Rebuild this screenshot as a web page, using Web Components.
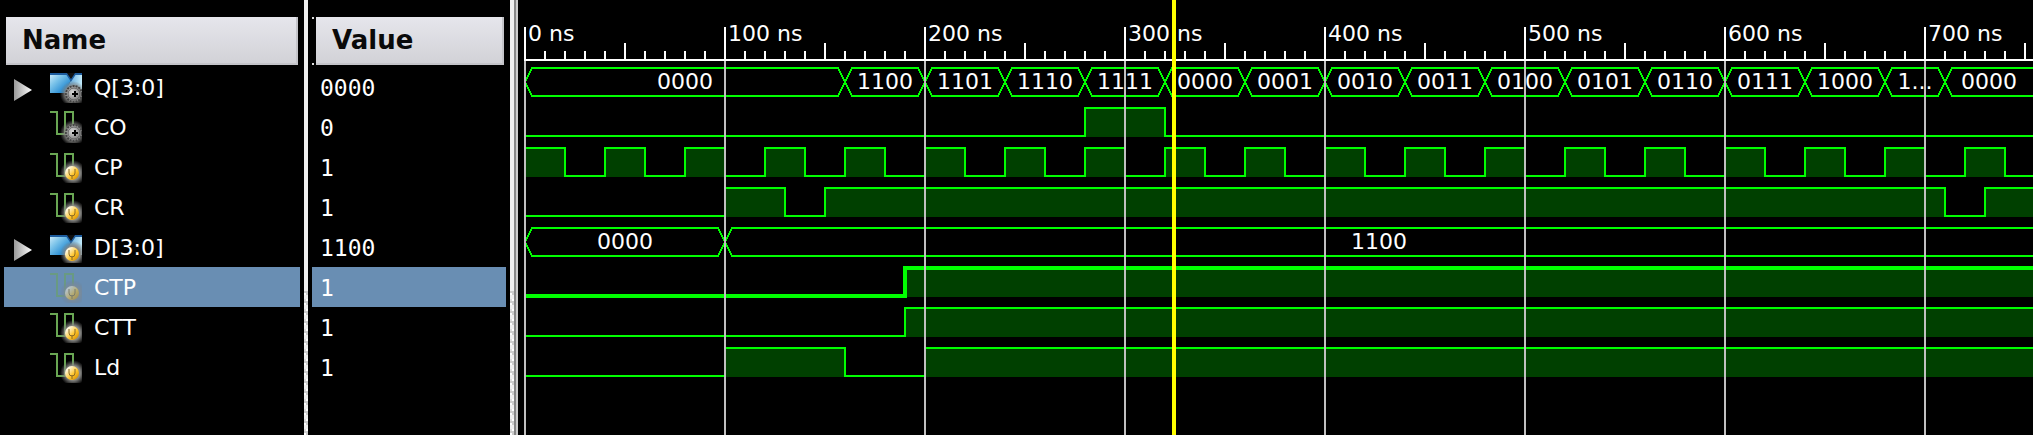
<!DOCTYPE html>
<html lang="en"><head><meta charset="utf-8"><title>Waveform viewer</title>
<style>html,body{margin:0;background:#000;height:100%}</style></head><body>
<wave-viewer></wave-viewer>
<script>
const END=4000; /* nanoseconds simulated */
const PX=2; /* pixels per nanosecond */
const SIGNALS=[
 {name:'Q[3:0]',value:'0000',dir:'out',bus:[[0,'0000'],[160,'1100'],[200,'1101'],[240,'1110'],[280,'1111'],[320,'0000'],[360,'0001'],[400,'0010'],[440,'0011'],[480,'0100'],[520,'0101'],[560,'0110'],[600,'0111'],[640,'1000'],[680,'1...'],[710,'0000']]},
 {name:'CO',value:'0',dir:'out',high:[[280,320]]},
 {name:'CP',value:'1',dir:'in',high:Array.from({length:END/40},(_,i)=>[i*40,i*40+20])},
 {name:'CR',value:'1',dir:'in',high:[[100,130],[150,710],[730,END]]},
 {name:'D[3:0]',value:'1100',dir:'in',bus:[[0,'0000'],[100,'1100']]},
 {name:'CTP',value:'1',dir:'in',selected:true,high:[[190,END]]},
 {name:'CTT',value:'1',dir:'in',high:[[190,END]]},
 {name:'Ld',value:'1',dir:'in',high:[[100,160],[200,END]]}
];

class SignalIcon extends HTMLElement{
 connectedCallback(){
  const bus=this.hasAttribute('bus'),out=this.getAttribute('dir')==='out';
  const y=bus?(out?2:4):(out?1:3),c=bus?23:22;
  this.attachShadow({mode:'open'}).innerHTML=`<style>:host{display:block;width:32px;height:32px}:host([dim]){opacity:.5}svg{display:block}</style>
  <svg width="32" height="32" viewBox="0 0 32 32" aria-hidden="true"><defs>
  <linearGradient id="l" x2="1" y2="1"><stop stop-color="#d4eefa"/><stop offset=".35" stop-color="#7cc4ea"/><stop offset=".8" stop-color="#1f86d0"/></linearGradient>
  <linearGradient id="r" x2="1"><stop stop-color="#3a8ed0"/><stop offset="1" stop-color="#c2ebfa"/></linearGradient>
  <radialGradient id="h"><stop offset=".55" stop-color="#8a8a86"/><stop offset="1" stop-color="#777" stop-opacity="0"/></radialGradient>
  <linearGradient id="y" x2="1" y2="1"><stop offset=".2" stop-color="#fff8e0"/><stop offset=".6" stop-color="#ffc426"/><stop offset="1" stop-color="#c88000"/></linearGradient>
  <radialGradient id="g" cx=".4" cy=".4"><stop stop-color="#d8d8d8"/><stop offset="1" stop-color="#858585"/></radialGradient></defs>
  ${bus?`<g transform="translate(0 ${y})"><path d="M0 0h16l5 7-6 13H0z" fill="url(#l)"/><path d="M25 0h7v20H14z" fill="url(#r)"/><path d="M0 1h17l4 6 4-6h7" fill="none" stroke="#1d5c9e" stroke-width="2"/><path d="M17 0h8l-4 6z" fill="#111"/></g>`
  :`<path transform="translate(0 ${y})" d="M0 0h7v22h8V0h8v18" fill="none" stroke="#69a653" stroke-width="2"/>`}
  <circle cx="23" cy="${c}" r="13" fill="url(#h)"/>
  <g transform="translate(0 ${c})">
  ${out?'<circle cx="24" r="8" fill="url(#g)" stroke="#444" stroke-width="2" stroke-dasharray="2 1"/><circle cx="24" r="6" fill="none" stroke="#666"/><path d="M25-3v6M22 0h6" stroke="#000" stroke-width="2"/>':'<circle cx="22" r="7" fill="url(#y)"/><path d="M19-4v4q0 3 3 3t3-3v-4M22 2v4" fill="none" stroke="#8a6a28" stroke-width="1"/>'}
  </g></svg>`;
 }
}
customElements.define('signal-icon',SignalIcon);

class SignalColumn extends HTMLElement{
 connectedCallback(){
  this.attachShadow({mode:'open'}).innerHTML=`<style>
  :host{display:block;flex:none;box-sizing:border-box;padding-top:17px;color:#fff}
  h2{box-sizing:border-box;height:48px;margin:0 2px 2px;padding:0 16px;font:bold 26px/46px "DejaVu Sans",sans-serif;color:#0a0a0a;background:linear-gradient(#e6e6ec,#d2d2d7);border-right:2px solid #c4c4c9;border-bottom:2px solid #c4c4c9}
  :host([kind=value]){background:linear-gradient(#ddd,#ddd) 0 17px/2px 2px no-repeat,linear-gradient(#ddd,#ddd) 0 63px/2px 2px no-repeat}
  :host([kind=value]) h2{margin-left:4px}
  </style><h2>${this.getAttribute('label')}</h2><slot></slot>`;
 }
}
customElements.define('signal-column',SignalColumn);

class SignalCell extends HTMLElement{
 connectedCallback(){
  this.attachShadow({mode:'open'}).innerHTML=`<style>
  :host{display:flex;box-sizing:border-box;align-items:center;height:40px;padding-top:2px;font:22px/38px "DejaVu Sans",sans-serif;color:#fff}
  :host([kind=value]){padding-left:8px;font:23px/38px "DejaVu Sans Mono",monospace}
  :host([selected]){background:#698eb3}
  .tree{width:46px;display:flex}
  button{appearance:none;border:0;padding:0;margin:4px 0 0 10px;background:none;display:block;width:18px;height:22px}
  svg{display:block} signal-icon{margin:2px 12px 0 0;align-self:flex-start}
  </style><slot></slot>`;
  const s=this.signal;
  if(this.getAttribute('kind')==='name'){
   this.shadowRoot.querySelector('slot').insertAdjacentHTML('beforebegin',`<div class="tree">${s.bus?`<button aria-label="Expand ${s.name}"><svg width="18" height="22" viewBox="0 0 18 22"><defs><linearGradient id="t"><stop stop-color="#999"/><stop offset="1" stop-color="#fff"/></linearGradient></defs><path d="M0 0l18 11L0 22z" fill="url(#t)"/></svg></button>`:''}</div><signal-icon dir="${s.dir}" ${s.bus?'bus':''} ${s.selected?'dim':''}></signal-icon>`);
  }
 }
}
customElements.define('signal-cell',SignalCell);

class PaneSplitter extends HTMLElement{
 connectedCallback(){
  this.attachShadow({mode:'open'}).innerHTML=`<style>
  :host{display:flex;box-sizing:border-box;flex-direction:column;flex:none;width:4px;background:#efefef}
  i{margin-top:291px;flex:1;background:
   repeating-linear-gradient(#ccc 0 2px,#fff 2px 4px,#efefef 4px 8px,#ddd 8px 10px) 0 0/2px 100% no-repeat,
   repeating-linear-gradient(#ccc 0 4px,#efefef 4px 8px,#fff 8px 10px) 2px 0/2px 100% no-repeat}
  :host([edge]){width:8px;border-right:2px solid #ccc;box-shadow:inset -2px 0 #888}
  :host([edge]) i{margin-right:2px}
  </style><i></i>`;
 }
}
customElements.define('pane-splitter',PaneSplitter);

class TimeRuler extends HTMLElement{
 connectedCallback(){
  this.attachShadow({mode:'open'}).innerHTML=`<style>
  :host{display:block;height:61px;overflow:hidden;background:
   linear-gradient(#fff,#fff) 0 100%/100% 2px no-repeat,
   repeating-linear-gradient(90deg,#fff 0 2px,transparent 2px 20px) 0 100%/100% 10px no-repeat,
   repeating-linear-gradient(90deg,#fff 0 2px,transparent 2px 100px) 0 100%/100% 18px no-repeat,
   repeating-linear-gradient(90deg,#fff 0 2px,transparent 2px 200px) 0 100%/100% 34px no-repeat}
  div{display:flex}
  span{flex:none;box-sizing:border-box;width:200px;padding:21px 0 0 4px;font:22px/26px "DejaVu Sans",sans-serif;color:#fff;white-space:pre}
  </style><div></div>`;
  this.row=this.shadowRoot.querySelector('div');
  this.observer=new ResizeObserver(()=>this.draw());
  this.observer.observe(this);
  this.draw();
 }
 draw(){
  let h='';
  for(let t=0;t*PX<this.clientWidth&&t<END;t+=100)h+=`<span>${t} ns</span>`;
  this.row.innerHTML=h;
 }
}
customElements.define('time-ruler',TimeRuler);

class WaveLane extends HTMLElement{
 connectedCallback(){
  this.attachShadow({mode:'open'}).innerHTML=`<style>
  :host{display:block;height:40px;overflow:hidden}
  svg{display:block;width:100%;height:40px;overflow:hidden}
  text{font:22px "DejaVu Sans",sans-serif;fill:#fff;text-anchor:middle}
  .l{fill:none;stroke:#0f0;stroke-width:2;shape-rendering:crispEdges}
  .thick{stroke-width:4}.f{fill:#004000}
  </style><svg></svg>`;
  this.svg=this.shadowRoot.querySelector('svg');
  this.observer=new ResizeObserver(()=>this.draw());
  this.observer.observe(this);
  this.draw();
 }
 draw(){
  const w=this.clientWidth,s=this.signal,x=t=>t*PX+1;
  let h='';
  if(s.bus){
   s.bus.forEach(([t,label],i)=>{
    const a=x(t),last=i===s.bus.length-1,b=last?w:x(s.bus[i+1][0]);
    if(a>=w)return;
    h+=last?`<path class="l" d="M${b} 7H${a+7}L${a} 21L${a+7} 35H${b}"/>`:`<path class="l" d="M${a} 21L${a+7} 7H${b-7}L${b} 21L${b-7} 35H${a+7}z"/>`;
    h+=`<text x="${Math.round((a+b)/2)}" y="28">${label}</text>`;
   });
  }else{
   let d='M0 35';
   for(const [p,q] of s.high){
    if(x(p)>w)break;
    const a=p?x(p):0,b=Math.min(x(q),w+4);
    h+=`<rect class="f" x="${a}" y="6" width="${b-a}" height="30"/>`;
    d+=p?`H${a}V7H${b}`:`M0 7H${b}`;
    d+='V35';
   }
   h+=`<path class="l ${s.selected?'thick':''}" d="${d}H${w+8}"/>`;
  }
  this.svg.innerHTML=h;
 }
}
customElements.define('wave-lane',WaveLane);

class WavePane extends HTMLElement{
 connectedCallback(){
  this.attachShadow({mode:'open'}).innerHTML=`<style>
  :host{display:block;position:relative;flex:1;min-width:0;overflow:hidden;margin-left:6px}
  .grid{position:absolute;inset:61px 0 0;background:repeating-linear-gradient(90deg,#c0c0c0 0 2px,transparent 2px 200px)}
  .cursor{position:absolute;top:0;bottom:0;left:${324*PX}px;width:4px;background:#ff0}
  </style><time-ruler></time-ruler><slot></slot><div class="grid"></div><div class="cursor"></div>`;
 }
}
customElements.define('wave-pane',WavePane);

class WaveViewer extends HTMLElement{
 connectedCallback(){
  this.attachShadow({mode:'open'}).innerHTML=`<style>
  :host{display:flex;min-height:100vh;background:#000;overflow:hidden}
  .n{width:296px;margin:0 4px}.v{width:194px;margin:0 4px}
  </style><signal-column class="n" label="Name" kind="name"></signal-column><pane-splitter></pane-splitter>
  <signal-column class="v" label="Value" kind="value"></signal-column><pane-splitter edge></pane-splitter><wave-pane></wave-pane>`;
  const [n,v]=this.shadowRoot.querySelectorAll('signal-column'),p=this.shadowRoot.querySelector('wave-pane');
  for(const s of SIGNALS){
   for(const [col,kind] of [[n,'name'],[v,'value']]){
    const c=document.createElement('signal-cell');c.signal=s;c.setAttribute('kind',kind);c.textContent=s[kind];
    if(s.selected)c.setAttribute('selected','');
    col.append(c);
   }
   const l=document.createElement('wave-lane');l.signal=s;p.append(l);
  }
 }
}
customElements.define('wave-viewer',WaveViewer);
</script></body></html>
